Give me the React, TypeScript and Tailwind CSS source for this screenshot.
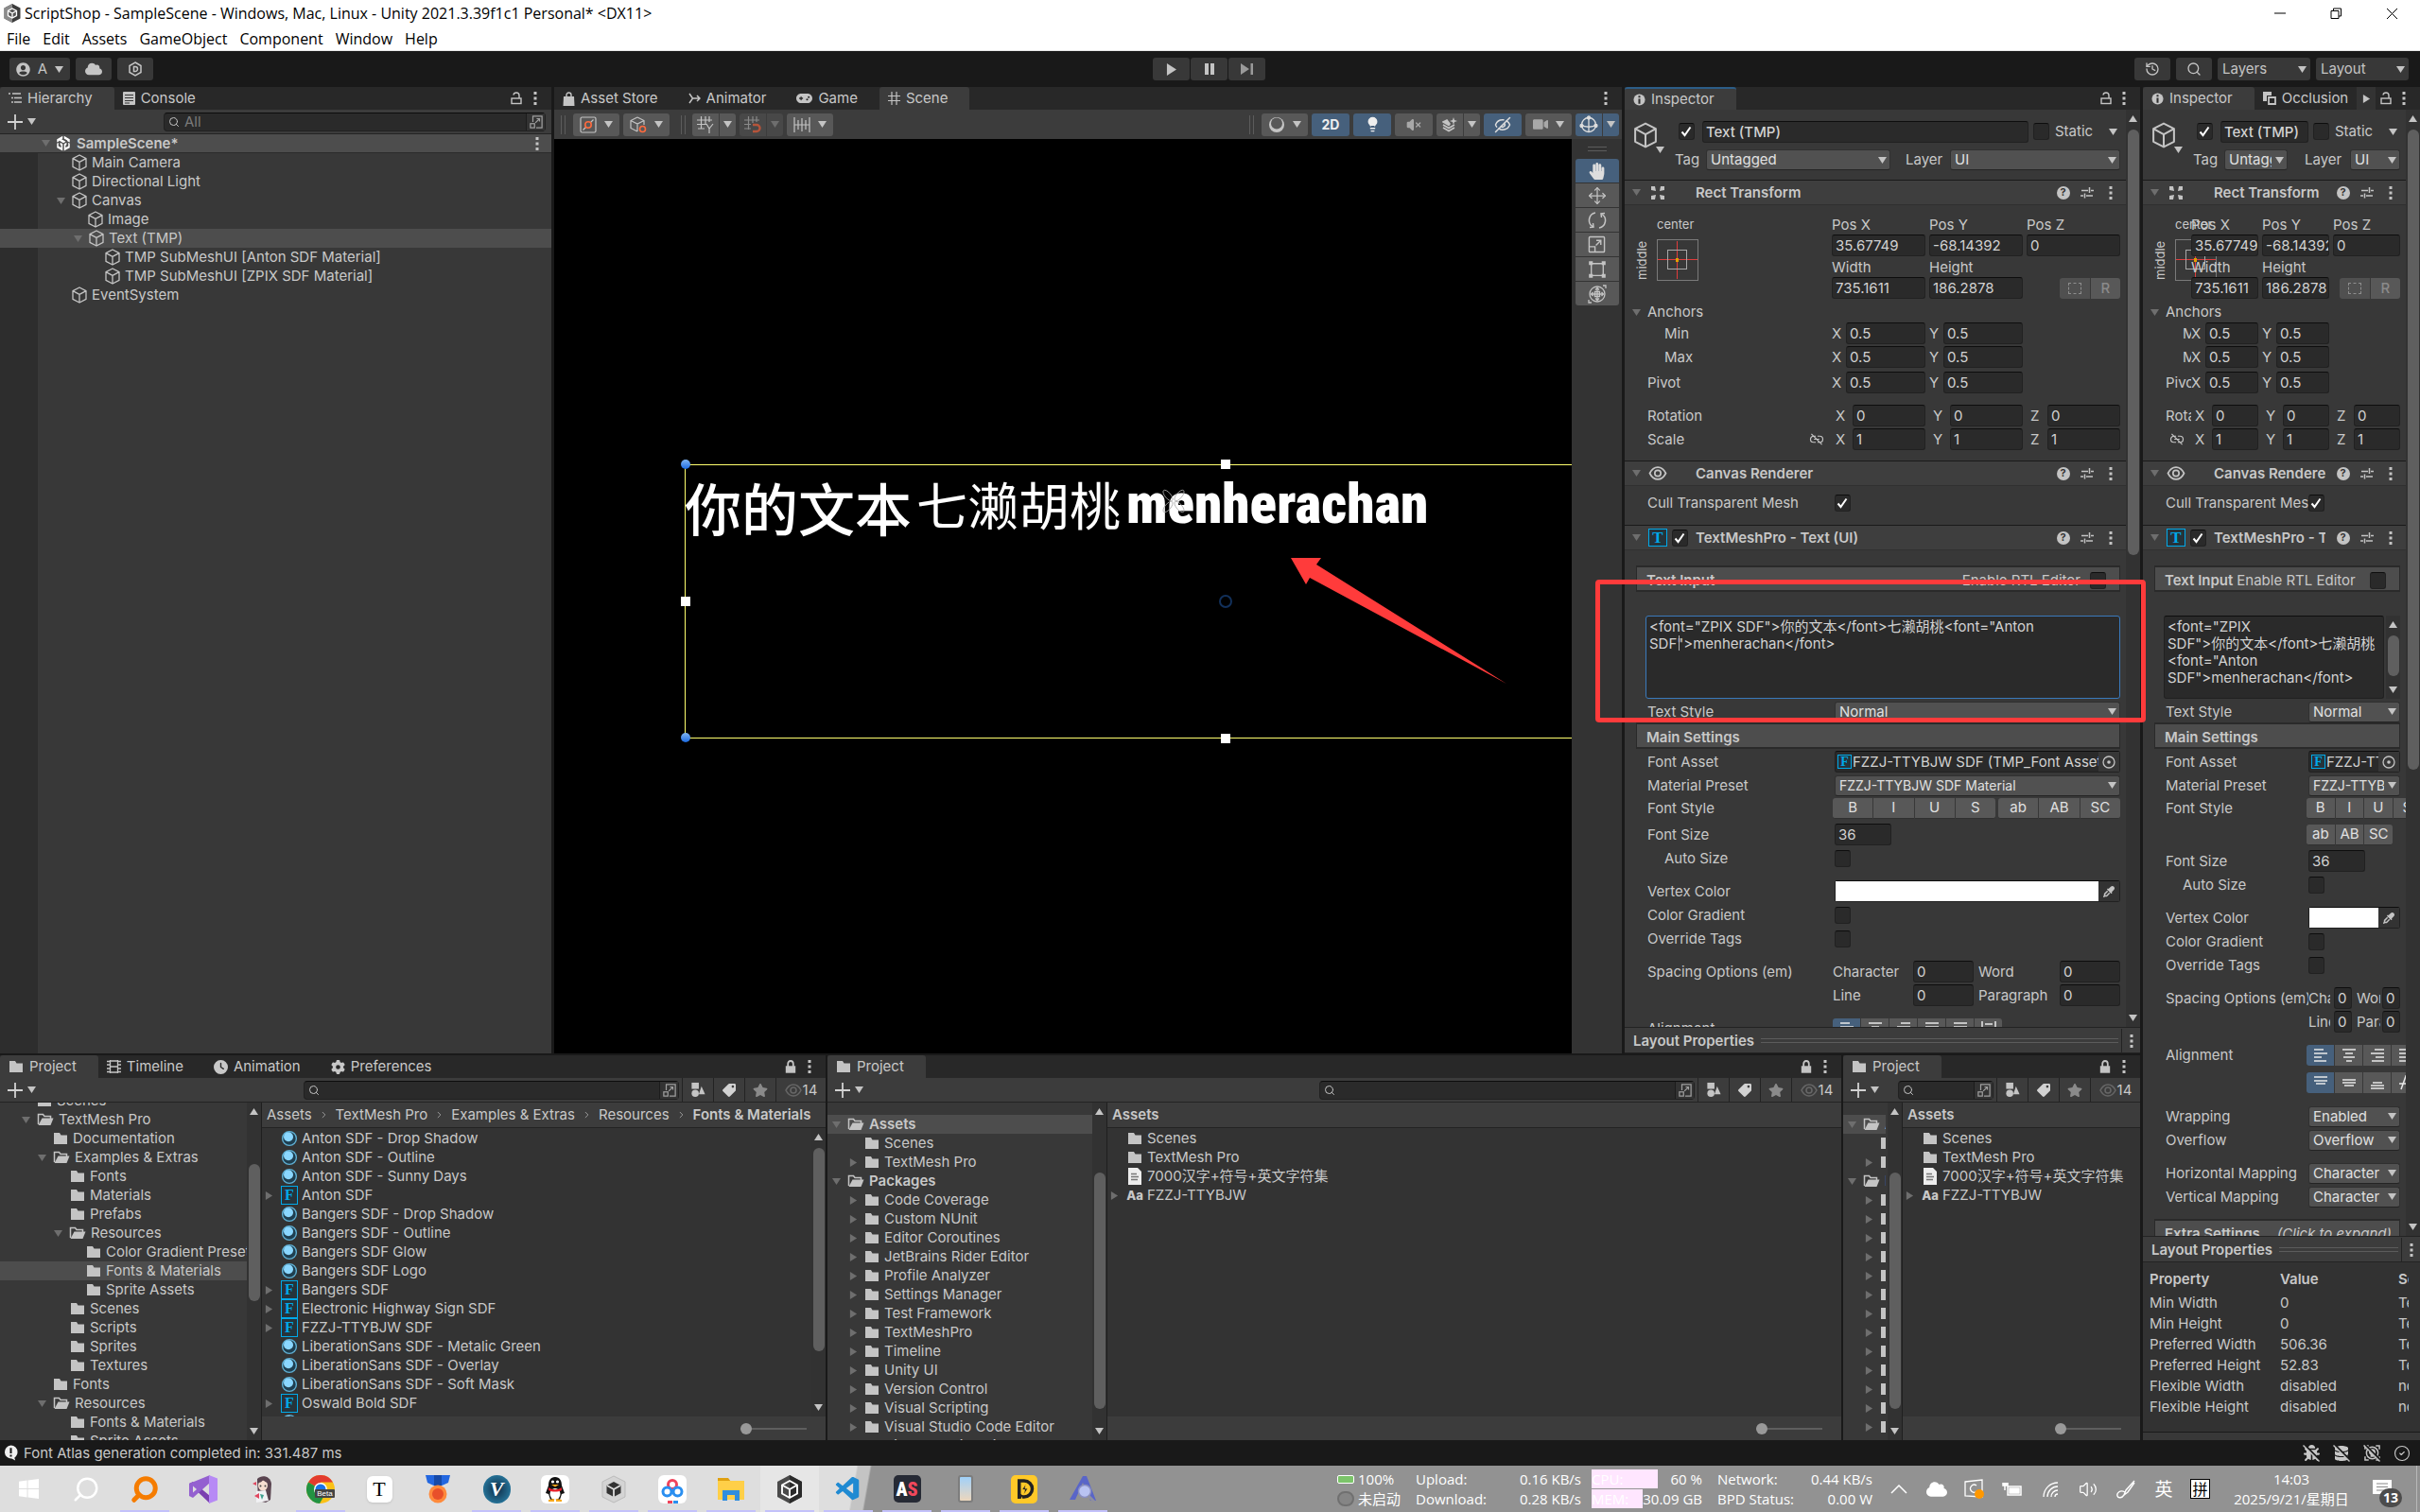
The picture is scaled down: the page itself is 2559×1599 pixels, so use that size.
import type { ReactNode } from 'react';
import { ChevronRight, CircleCheck, EyeOff, History, Lightbulb, Move, Search, Volume2, VolumeX } from 'lucide-react';
import { FaBug, FaCloud, FaDatabase, FaHandPaper, FaStar, FaTag, FaUserCircle, FaVideo } from 'react-icons/fa';
import { FaClock, FaEyeDropper, FaGamepad, FaGear } from 'react-icons/fa6';
import { VscVscode } from 'react-icons/vsc';

const fieldBase =
  'min-w-0 rounded-[3px] border border-[#212121] border-t-[#0d0d0d] bg-[#2a2a2a] text-[#d2d2d2] outline-none';
const divider = 'border-[#232323]';

/* ---------- icons ---------- */

function Tri({ dir = 'down', dim = false, className = '' }: { dir?: 'down' | 'right' | 'up'; dim?: boolean; className?: string }) {
  const d = dir === 'down' ? 'M0 1h10L5 9z' : dir === 'up' ? 'M0 9h10L5 1z' : 'M1 0v10l8-5z';
  return (
    <svg viewBox="0 0 10 10" className={'h-[9px] w-[9px] shrink-0 ' + (dim ? 'fill-[#6e6e6e] ' : 'fill-[#c4c4c4] ') + className}>
      <path d={d} />
    </svg>
  );
}

function Dots() {
  return (
    <svg viewBox="0 0 4 16" className="h-4 w-1 shrink-0 fill-[#c4c4c4]">
      <rect x="0.5" y="1" width="3" height="3" />
      <rect x="0.5" y="6.5" width="3" height="3" />
      <rect x="0.5" y="12" width="3" height="3" />
    </svg>
  );
}

function LockIcon({ open = false }: { open?: boolean }) {
  return (
    <svg viewBox="0 0 12 14" className="h-[14px] w-3 shrink-0" fill="none" stroke="#c4c4c4" strokeWidth="1.4">
      {open ? (
        <>
          <rect x="1" y="7" width="10" height="5.5" />
          <path d="M3 3.5C3.2 1.6 4.5 1 6 1c2 0 3 1 3 3v3" />
        </>
      ) : (
        <>
          <rect x="1.5" y="7" width="9" height="6" fill="#c4c4c4" />
          <path d="M3.2 7V4c0-2 1-3 2.8-3s2.8 1 2.8 3v3" strokeWidth="1.8" />
        </>
      )}
    </svg>
  );
}

function Cube({ className = 'h-[18px] w-[18px]' }: { className?: string }) {
  return (
    <svg
      viewBox="0 0 18 18"
      className={'shrink-0 ' + className}
      fill="none"
      stroke="#c4c4c4"
      strokeWidth="1.3"
      strokeLinejoin="round"
    >
      <path d="M9 1l7 3.6v8.8L9 17l-7-3.6V4.6zM2 4.6l7 3.8 7-3.8M9 8.4V17" />
    </svg>
  );
}

function UnityLogo({ className = 'h-[18px] w-[18px]' }: { className?: string }) {
  return (
    <svg viewBox="0 0 24 24" className={'shrink-0 ' + className} fill="#fff">
      <path d="M11 1L3 5.500v4.500l3-1.700v-.9l2.700 1.600L12 11l3.300-2-3.300-1.900 0 0 2.700-1.600L17.500 7.400v.9l3.500 1.700V5.500L13 1v3.600l1.500.9L12 7 9.500 5.500l1.500-.9z" />
      <path d="M3 11.500v6L11 22v-9.600L7.500 10.400v3.200l1.400.8v3L5 15.200v-4.800zM21 11.500v6L13 22v-9.600l3.500-2v3.200l-1.400.8v3l3.900-2.200v-4.800z" />
    </svg>
  );
}

function AppIcon() {
  return (
    <svg viewBox="0 0 18 20" className="mx-1 h-5 w-[18px] shrink-0">
      <path d="M9 0l8.500 4.500v11L9 20 .5 15.500v-11z" fill="#3c3c3c" />
      <path d="M9 0L.5 4.500v11L9 20z" fill="#8b8b8b" />
      <path d="M9 5l4.500 2.500v5L9 15l-4.500-2.500v-5z" fill="#555" stroke="#fff" strokeWidth="1.300" />
      <path d="M9 10v5M9 10L4.500 7.500M9 10l4.500-2.500" stroke="#fff" strokeWidth="1.300" />
    </svg>
  );
}

function Folder({ open = false }: { open?: boolean }) {
  return open ? (
    <svg viewBox="0 0 18 16" className="h-4 w-[18px] shrink-0">
      <path d="M1.500 13V2.500h5l1.500 2h6.500V7" fill="none" stroke="#c4c4c4" strokeWidth="1.500" />
      <path d="M5.500 6.500H17.500L14.500 14H1.500z" fill="#c4c4c4" />
    </svg>
  ) : (
    <svg viewBox="0 0 16 14" className="h-[14px] w-4 shrink-0">
      <path d="M1 1h6l1.500 2.500H15V13H1z" fill="#c4c4c4" />
    </svg>
  );
}

function MaterialBall() {
  return (
    <svg viewBox="0 0 18 18" className="h-[18px] w-[18px] shrink-0">
      <circle cx="9" cy="9" r="7.400" fill="#1f3f50" stroke="#5fb0d4" strokeWidth="1.400" />
      <circle cx="8" cy="7.300" r="5" fill="#8ad7ff" />
    </svg>
  );
}

function GlyphBox({ glyph, className = 'h-5 w-[18px] text-[16px]' }: { glyph: string; className?: string }) {
  return (
    <span
      className={
        "flex shrink-0 items-center justify-center border border-[#00a9e9] bg-[#26333a] font-['Liberation_Serif',serif] leading-none font-bold text-[#00a9e9] " +
        className
      }
    >
      {glyph}
    </span>
  );
}

function DocIcon() {
  return (
    <svg viewBox="0 0 16 18" className="h-[18px] w-4 shrink-0">
      <path d="M1 0h10l4 4v14H1z" fill="#ededed" />
      <path d="M4 6.500h6M4 9.500h8M4 12.500h7" stroke="#777" strokeWidth="1.300" />
    </svg>
  );
}

function InfoIcon() {
  return (
    <svg viewBox="0 0 14 14" className="h-[13px] w-[13px] shrink-0">
      <circle cx="7" cy="7" r="6.500" fill="#c4c4c4" />
      <path d="M7 2.500v2M7 6v5.500" stroke="#2d2d2d" strokeWidth="2.200" />
    </svg>
  );
}

function HelpIcon() {
  return (
    <span className="flex h-[14px] w-[14px] items-center justify-center rounded-full bg-[#c4c4c4] text-[11px] leading-none font-bold text-[#333]">
      ?
    </span>
  );
}

function PresetIcon() {
  return (
    <svg viewBox="0 0 14 14" className="h-[14px] w-[14px]" stroke="#c4c4c4" strokeWidth="1.500">
      <path d="M1 4.500h7M11 4.500h3M9.500 1v6M0 10h3M6 10h7M4.500 7.500v5" />
    </svg>
  );
}

function SearchWindowIcon() {
  return (
    <svg viewBox="0 0 16 16" className="h-[14px] w-[14px]" fill="none" stroke="#a0a0a0" strokeWidth="1.400">
      <path d="M4 8V1h11v14H8" />
      <rect x="1" y="10" width="5" height="5" />
      <path d="M7 9l5-5M8.500 4H12v3.500" />
    </svg>
  );
}

function ListLines() {
  return (
    <svg viewBox="0 0 14 14" className="h-[14px] w-[14px]" stroke="#c4c4c4" strokeWidth="1.400">
      <path d="M0 2h2M4 2h9M3 6.500h2M6 6.500h8M3 11h2M6 11h8" />
    </svg>
  );
}

function ConsoleIcon() {
  return (
    <svg viewBox="0 0 13 14" className="h-[14px] w-[13px]">
      <rect width="13" height="14" rx="1" fill="#c4c4c4" />
      <path d="M2 3.500h9M2 6.500h9M2 9.500h9M2 12h5" stroke="#333" strokeWidth="1.100" />
    </svg>
  );
}

function GridIcon() {
  return (
    <svg viewBox="0 0 13 14" className="h-[14px] w-[13px]" stroke="#c4c4c4" strokeWidth="1.200">
      <path d="M4 0v14M9 0v14M0 4.500h13M0 9.500h13" />
    </svg>
  );
}

function BagIcon() {
  return (
    <svg viewBox="0 0 13 15" className="h-[15px] w-[13px]">
      <path d="M1 5h11l.5 10H.5z" fill="#c4c4c4" />
      <path d="M4 7V3.500C4 2 5 1 6.500 1S9 2 9 3.500V7" fill="none" stroke="#c4c4c4" strokeWidth="1.400" />
    </svg>
  );
}

function AnimatorIcon() {
  return (
    <svg viewBox="0 0 13 12" className="h-3 w-[13px]" fill="none" stroke="#c4c4c4" strokeWidth="1.500">
      <path d="M1 1l3.500 5L1 11M4.500 6H12M9 3l3 3-3 3" />
    </svg>
  );
}

function FilmIcon() {
  return (
    <svg viewBox="0 0 15 14" className="h-[14px] w-[15px]" fill="none" stroke="#c4c4c4" strokeWidth="1.300">
      <path d="M3.500 0v14M11.500 0v14M3.500 7h8M3.500 1h8M3.500 13h8" />
      <path d="M0 1.500h3M0 5h3M0 9h3M0 12.500h3M12 1.500h3M12 5h3M12 9h3M12 12.500h3" />
    </svg>
  );
}

function LinkOffIcon() {
  return (
    <svg viewBox="0 0 16 14" className="h-[13px] w-4" fill="none" stroke="#c4c4c4" strokeWidth="1.300">
      <path d="M7 3.500H4.500a3.500 3.500 0 000 7H7M9 3.500h2.500a3.500 3.500 0 010 7H9M5 7h6M2 1l12 12" />
    </svg>
  );
}

function ShapesIcon() {
  return (
    <svg viewBox="0 0 16 18" className="h-[17px] w-4 fill-[#c4c4c4]">
      <rect x="1" y="1" width="8" height="7" />
      <circle cx="5" cy="13" r="4" />
      <path d="M12 5l4 9H9z" />
    </svg>
  );
}

function EyeMark({ className }: { className: string }) {
  return (
    <svg viewBox="0 0 18 16" className={className} fill="none" stroke="currentColor" strokeWidth="1.600">
      <path d="M1 8c2-4 5-6 8-6s6 2 8 6c-2 4-5 6-8 6S3 12 1 8z" />
      <circle cx="9" cy="8" r="3" />
    </svg>
  );
}

/* dark gap with a light stroke, laid over an icon that is switched off */
function Slashed({ children }: { children: ReactNode }) {
  return (
    <span className="relative flex h-[18px] w-[18px] items-center justify-center">
      {children}
      <svg viewBox="0 0 18 18" className="absolute inset-0 h-[18px] w-[18px]">
        <path d="M2 0l17 17" stroke="#191919" strokeWidth="2" />
        <path d="M0.500 0.500l17 17" stroke="#c4c4c4" strokeWidth="1.400" />
      </svg>
    </span>
  );
}

/* ---------- shared controls ---------- */

function Check({ id, label, checked = false }: { id?: string; label?: string; checked?: boolean }) {
  return (
    <span className="relative flex shrink-0">
      <input
        id={id}
        aria-label={label}
        type="checkbox"
        defaultChecked={checked}
        className="peer h-[18px] w-[17px] appearance-none rounded-[3px] border border-[#212121] border-t-[#0d0d0d] bg-[#2a2a2a]"
      />
      <svg
        viewBox="0 0 12 12"
        className="pointer-events-none absolute top-[3px] left-[2px] hidden h-3 w-3 peer-checked:block"
        fill="none"
        stroke="#fff"
        strokeWidth="2"
      >
        <path d="M1.500 6.500L4.500 10l6-8.500" />
      </svg>
    </span>
  );
}

function Pick({ id, label, value, className = '' }: { id?: string; label?: string; value: string; className?: string }) {
  return (
    <span className={'relative flex h-[22px] min-w-0 items-center ' + className}>
      <select
        id={id}
        aria-label={label}
        className="h-full w-full appearance-none overflow-hidden rounded-[3px] border border-[#303030] border-b-[#242424] bg-[#515151] pl-1 text-[#e0e0e0] outline-none"
      >
        <option>{value}</option>
      </select>
      <span className="pointer-events-none absolute right-px flex h-[18px] w-4 items-center justify-center bg-[#515151]">
        <Tri />
      </span>
    </span>
  );
}

function TextField({ id, label, value, className = '' }: { id?: string; label?: string; value: string; className?: string }) {
  return (
    <input
      id={id}
      aria-label={label}
      defaultValue={value}
      className={fieldBase + ' h-[23px] pl-[3px] ' + className}
    />
  );
}

function Tab({ icon, children, active = false, focused = false }: { icon: ReactNode; children: ReactNode; active?: boolean; focused?: boolean }) {
  return (
    <button
      className={
        'flex h-6 shrink-0 items-center gap-[6px] rounded-t-[3px] pr-[23px] pl-[9px] ' +
        (active ? 'bg-[#3c3c3c] ' : '') +
        (focused ? 'border-t-2 border-[#2c5d87]' : '')
      }
    >
      {icon}
      {children}
    </button>
  );
}

function TabBar({ children, locked, gap = 'gap-3' }: { children: ReactNode; locked?: 'open' | 'closed'; gap?: string }) {
  return (
    <div className="flex h-6 shrink-0 items-center bg-[#282828]">
      <div className="flex min-w-0 flex-1 overflow-hidden">{children}</div>
      <div className={'flex shrink-0 items-center pr-[15px] ' + gap}>
        {locked && (
          <button aria-label="Lock">
            <LockIcon open={locked === 'open'} />
          </button>
        )}
        <button aria-label="More">
          <Dots />
        </button>
      </div>
    </div>
  );
}

function Scrollbar({ thumb, className = '' }: { thumb: string; className?: string }) {
  return (
    <div className={'flex w-[15px] shrink-0 flex-col items-center bg-[#323232] py-[5px] ' + className}>
      <Tri dir="up" />
      <div className="flex min-h-0 w-full flex-1 flex-col items-center py-[7px]">
        <div className={'w-3 shrink-0 rounded-full bg-[#5f5f5f] ' + thumb} />
      </div>
      <Tri />
    </div>
  );
}

/* ---------- hierarchy ---------- */

const hierarchy = [
  { name: 'Main Camera', pad: 'pl-[75px]' },
  { name: 'Directional Light', pad: 'pl-[75px]' },
  { name: 'Canvas', pad: 'pl-[60px]', open: true },
  { name: 'Image', pad: 'pl-[92px]' },
  { name: 'Text (TMP)', pad: 'pl-[78px]', open: true, selected: true },
  { name: 'TMP SubMeshUI [Anton SDF Material]', pad: 'pl-[110px]' },
  { name: 'TMP SubMeshUI [ZPIX SDF Material]', pad: 'pl-[110px]' },
  { name: 'EventSystem', pad: 'pl-[75px]' },
];

function Hierarchy() {
  return (
    <section className="flex w-[583px] shrink-0 flex-col overflow-hidden bg-[#383838]">
      <TabBar locked="open">
        <Tab active icon={<ListLines />}>
          Hierarchy
        </Tab>
        <Tab icon={<ConsoleIcon />}>Console</Tab>
      </TabBar>
      <div className="flex h-[26px] shrink-0 items-center border-b border-[#232323] bg-[#3c3c3c] pr-[6px] pl-2">
        <AddButton />
        <SearchBox placeholder="All" className="ml-auto w-[404px]" />
      </div>
      <div className="flex h-5 items-center gap-[5px] border-b border-[#2b2b2b] bg-[#4d4d4d] pr-[13px] pl-[44px] font-semibold">
        <Tri dim />
        <UnityLogo />
        <span className="flex-1">SampleScene*</span>
        <Dots />
      </div>
      <ul className="flex-1 bg-linear-to-r from-[#2d2d2d] from-[40px] to-[#383838] to-[40px]">
        {hierarchy.map((n) => (
          <li
            key={n.name}
            className={'flex h-5 items-center gap-1 whitespace-nowrap ' + n.pad + (n.selected ? ' bg-[#4d4d4d]' : '')}
          >
            {n.open && <Tri dim className="mr-0.5" />}
            <Cube />
            {n.name}
          </li>
        ))}
      </ul>
    </section>
  );
}

function AddButton() {
  return (
    <button aria-label="Add" className="flex shrink-0 items-center gap-[5px]">
      <svg viewBox="0 0 16 16" className="h-4 w-4" stroke="#d2d2d2" strokeWidth="1.800">
        <path d="M8 0v16M0 8h16" />
      </svg>
      <Tri />
    </button>
  );
}

function SearchBox({ placeholder, className }: { placeholder?: string; className: string }) {
  return (
    <div className={'flex h-5 items-center rounded-[4px] border border-[#212121] border-t-[#0d0d0d] bg-[#2a2a2a] ' + className}>
      <Search className="ml-1 h-3 w-3 shrink-0 text-[#c4c4c4]" />
      <input
        aria-label="Search"
        placeholder={placeholder}
        className="w-full min-w-0 flex-1 bg-transparent pl-[5px] text-[#d2d2d2] outline-none placeholder:text-[#7a7a7a]"
      />
      <button aria-label="Open search window" className="flex h-full w-5 shrink-0 items-center justify-center border-l border-[#1c1c1c] bg-[#333]">
        <SearchWindowIcon />
      </button>
    </div>
  );
}

/* ---------- scene view ---------- */

function Grip({ vertical = false }: { vertical?: boolean }) {
  return vertical ? (
    <span className="h-[5px] w-5 border-y border-[#5c5c5c]" />
  ) : (
    <span className="h-5 w-[5px] border-x border-[#5c5c5c]" />
  );
}

function ToolButton({ label, children, on = false, arrow = false, split = false, dim = false, className = '' }: {
  label: string;
  children: ReactNode;
  on?: boolean;
  arrow?: boolean;
  split?: boolean;
  dim?: boolean;
  className?: string;
}) {
  const bg = on ? 'bg-[#46607c] ' : dim ? 'bg-[#484848] ' : 'bg-[#585858] ';
  if (split) {
    return (
      <span className={'flex gap-px ' + className}>
        <button aria-label={label} className={'flex h-6 w-7 items-center justify-center rounded-l-[3px] ' + bg}>
          {children}
        </button>
        <button aria-label={label + ' options'} className={'flex h-6 w-[17px] items-center justify-center rounded-r-[3px] ' + bg}>
          <Tri dim={dim} />
        </button>
      </span>
    );
  }
  return (
    <button
      aria-label={label}
      className={'flex h-6 items-center justify-center gap-2 rounded-[3px] ' + (arrow ? 'w-[49px] ' : 'w-10 ') + bg + className}
    >
      {children}
      {arrow && <Tri />}
    </button>
  );
}

function SceneToolbar() {
  return (
    <div className="flex h-[31px] shrink-0 items-center gap-1 bg-[#3c3c3c] pr-[3px] pl-[7px]">
      <Grip />
      <ToolButton label="Pivot" arrow className="ml-1">
        <svg viewBox="0 0 18 18" className="h-[18px] w-[18px]" fill="none" stroke="#c4c4c4" strokeWidth="1.200">
          <rect x="1" y="1" width="16" height="16" rx="1.500" />
          <path d="M14.500 3.500l-3 3M6.500 11.500l-3 3" />
          <circle cx="9" cy="9" r="3.200" stroke="#ff6a3d" strokeWidth="1.600" />
        </svg>
      </ToolButton>
      <ToolButton label="Local" arrow>
        <svg viewBox="0 0 18 18" className="h-[18px] w-[18px]" fill="none" stroke="#c4c4c4" strokeWidth="1.200">
          <path d="M8 1l7 3.500V9M8 16l-7-3.500v-8L8 1M1 4.500L8 8l7-3.500M8 8v8" />
          <circle cx="13.500" cy="13.500" r="3" stroke="#ff6a3d" strokeWidth="1.600" />
        </svg>
      </ToolButton>
      <span className="mr-[3px] ml-2 flex">
        <Grip />
      </span>
      <ToolButton label="Grid" split>
        <svg viewBox="0 0 18 18" className="h-[18px] w-[18px]" fill="none" stroke="#c4c4c4" strokeWidth="1.200">
          <path d="M4.500 0v13M9 0v9M13 0v6M0 4h16M0 8.500h10M1 13h7M10 8l3 5 4-5M13 13v5" />
        </svg>
      </ToolButton>
      <ToolButton label="Snap" split dim>
        <svg viewBox="0 0 18 18" className="h-[18px] w-[18px]" fill="none" stroke="#8a8a8a" strokeWidth="1.200">
          <path d="M4.500 0v14M9 0v7M13 0v6M0 4h16M0 8.500h7M0 13h7" />
          <path d="M9 9h4a3.500 3.500 0 010 7H9" stroke="#b5543a" strokeWidth="2.400" />
        </svg>
      </ToolButton>
      <ToolButton label="Increment" arrow>
        <svg viewBox="0 0 18 18" className="h-[18px] w-[18px]" fill="none" stroke="#c4c4c4" strokeWidth="1.200">
          <path d="M1 1v16M17 1v16M5 4v10M9 2v14M13 4v10M1 9h16" />
        </svg>
      </ToolButton>
      <div className="ml-auto flex items-center gap-1">
        <span className="mr-1 flex">
          <Grip />
        </span>
        <ToolButton label="Draw mode" arrow>
          <svg viewBox="0 0 18 18" className="h-[18px] w-[18px]">
            <circle cx="9" cy="9" r="8" fill="#c4c4c4" />
            <circle cx="9" cy="7.500" r="6" fill="#585858" />
          </svg>
        </ToolButton>
        <ToolButton label="2D" on>
          <span className="text-sm font-bold text-[#eee]">2D</span>
        </ToolButton>
        <ToolButton label="Lighting" on>
          <Lightbulb className="h-[17px] w-[17px] fill-[#eee] text-[#eee]" />
        </ToolButton>
        <ToolButton label="Audio">
          <VolumeX className="h-4 w-4 fill-[#a8a8a8] text-[#a8a8a8]" />
        </ToolButton>
        <ToolButton label="Effects" split>
          <svg viewBox="0 0 16 16" className="h-4 w-4" fill="none" stroke="#c4c4c4" strokeWidth="1.600">
            <path d="M1 11l6 3.500 6-3.500M1 8l6 3.500L13 8" />
            <path d="M1 5l4-2 3 4-1 1.500z" fill="#c4c4c4" />
            <path d="M12 0l1 3 3 1-3 1-1 3-1-3-3-1 3-1z" fill="#c4c4c4" stroke="none" />
          </svg>
        </ToolButton>
        <ToolButton label="Visibility" on>
          <EyeOff className="h-[18px] w-[18px] -scale-x-100 text-[#ddd]" />
        </ToolButton>
        <ToolButton label="Camera" arrow>
          <FaVideo className="h-[15px] w-4 text-[#a8a8a8]" />
        </ToolButton>
        <ToolButton label="Gizmos" split on>
          <svg viewBox="0 0 20 20" className="h-5 w-5" fill="none" stroke="#ddd" strokeWidth="1.300">
            <circle cx="10" cy="10" r="7.500" />
            <path d="M10 2v16M2 10c4 3 12 3 16 0" />
            <circle cx="10" cy="2.500" r="1.500" fill="#ddd" />
            <circle cx="2.500" cy="11" r="1.500" fill="#ddd" />
            <circle cx="17.500" cy="11" r="1.500" fill="#ddd" />
          </svg>
        </ToolButton>
      </div>
    </div>
  );
}

const sceneTools = [
  { label: 'Hand', icon: <FaHandPaper className="h-[18px] w-[17px] text-[#ddd]" /> },
  { label: 'Move', icon: <Move className="h-5 w-5" strokeWidth={1.5} /> },
  {
    label: 'Rotate',
    icon: (
      <svg viewBox="0 0 20 20" className="h-5 w-5" fill="none" stroke="currentColor" strokeWidth="1.500">
        <path d="M8 2a8 8 0 00-3 14.500M12 18a8 8 0 003-14.500M2 17.500l4-.5-.500-4M18 2.500l-4 .5.500 4" />
      </svg>
    ),
  },
  {
    label: 'Scale',
    icon: (
      <svg viewBox="0 0 20 20" className="h-[19px] w-[19px]" fill="none" stroke="currentColor" strokeWidth="1.500">
        <rect x="1.500" y="1.500" width="17" height="17" rx="1" />
        <path d="M2 12.500h6V18M9 11l5-5M9.500 5.500H14.500v5" />
      </svg>
    ),
  },
  {
    label: 'Rect',
    icon: (
      <svg viewBox="0 0 20 20" className="h-[18px] w-[18px]" fill="currentColor" stroke="currentColor" strokeWidth="1.500">
        <path d="M3 3h14v14H3z" fill="none" />
        <path d="M1 1h3v3H1zM16 1h3v3h-3zM1 16h3v3H1zM16 16h3v3h-3z" />
      </svg>
    ),
  },
  {
    label: 'Transform',
    icon: (
      <svg viewBox="0 0 20 20" className="h-5 w-5" fill="none" stroke="currentColor" strokeWidth="1.300">
        <circle cx="10" cy="10" r="8" />
        <path d="M10 3.500v13M3.500 10h13M8 5.500l2-2 2 2M8 14.500l2 2 2-2M5.500 8l-2 2 2 2M14.500 8l2 2-2 2M7.500 7.500h5v5h-5z" />
        <path d="M16 1h3v3M4 19H1v-3" />
      </svg>
    ),
  },
];

function Handle({ className }: { className: string }) {
  return <span className={'absolute h-[10px] w-[10px] bg-white ' + className} />;
}

function Dot({ className }: { className: string }) {
  return <span className={'absolute h-[10px] w-[10px] rounded-full bg-linear-to-b from-[#7fb4f0] to-[#1668e0] ' + className} />;
}

function Scene() {
  return (
    <section className="flex min-w-0 flex-1 flex-col bg-[#383838]">
      <TabBar>
        <Tab icon={<BagIcon />}>Asset Store</Tab>
        <Tab icon={<AnimatorIcon />}>Animator</Tab>
        <Tab icon={<FaGamepad className="h-4 w-[17px] text-[#c4c4c4]" />}>Game</Tab>
        <Tab active icon={<GridIcon />}>
          Scene
        </Tab>
      </TabBar>
      <SceneToolbar />
      <div className="flex min-h-0 flex-1">
        <div className="relative min-w-0 flex-1 overflow-hidden bg-black">
          <div className="absolute top-[344px] left-[138px] h-[290px] w-[1144px] border border-[#ffff6e]" />
          <Dot className="top-[339px] left-[134px]" />
          <Dot className="top-[628px] left-[134px]" />
          <Handle className="top-[339px] left-[705px]" />
          <Handle className="top-[629px] left-[705px]" />
          <Handle className="top-[484px] left-[134px]" />
          <span className="absolute top-[482px] left-[703px] h-[14px] w-[14px] rounded-full border-2 border-[#12305a]" />
          <p className="absolute top-[345px] left-[138px] font-['Noto_Sans_CJK_SC',sans-serif] text-[60px] leading-[88px] font-medium whitespace-nowrap text-white">
            你的文本
          </p>
          <p className="absolute top-[342px] left-[383px] font-['Noto_Sans_CJK_SC',sans-serif] text-[54px] leading-[88px] whitespace-nowrap text-white">
            七濑胡桃
          </p>
          <p className="absolute top-[346px] left-[605px] font-['Roboto_Condensed','Roboto',sans-serif] text-[59px] leading-[80px] font-black whitespace-nowrap text-white">
            menherachan
          </p>
          <svg viewBox="0 0 28 28" className="absolute top-[369px] left-[641px] h-7 w-7" fill="none" stroke="#aaa" strokeWidth="0.800">
            <ellipse cx="8" cy="8" rx="3" ry="7" transform="rotate(-40 8 8)" />
            <ellipse cx="20" cy="8" rx="3" ry="7" transform="rotate(40 20 8)" />
            <ellipse cx="8" cy="20" rx="3" ry="7" transform="rotate(40 8 20)" />
            <ellipse cx="20" cy="20" rx="3" ry="7" transform="rotate(-40 20 20)" />
          </svg>
          <svg viewBox="0 0 230 134" className="absolute top-[443px] left-[779px] h-[134px] w-[230px] fill-[#ff3b3b]">
            <path d="M0 0h32l-5 7 201 126L20 21l-4 7z" />
          </svg>
        </div>
        <div className="flex w-[53px] shrink-0 flex-col items-center bg-[#333]">
          <span className="mt-[8px] mb-[8px] flex">
            <Grip vertical />
          </span>
          <div className="flex flex-col gap-px">
            {sceneTools.map((t, i) => (
              <button
                key={t.label}
                aria-label={t.label}
                className={
                  'flex h-[25px] w-[46px] items-center justify-center text-[#c4c4c4] first:rounded-t-[3px] last:rounded-b-[3px] ' +
                  (i === 0 ? 'bg-[#46607c]' : 'bg-[#585858]')
                }
              >
                {t.icon}
              </button>
            ))}
          </div>
        </div>
      </div>
    </section>
  );
}

/* ---------- inspector ---------- */

function ComponentHeader({ icon, title, check = false }: { icon: ReactNode; title: string; check?: boolean }) {
  return (
    <div className="flex h-[27px] shrink-0 items-center border-t border-b border-t-[#1a1a1a] border-b-[#303030] bg-[#3e3e3e] pr-1 pl-2">
      <Tri dim />
      <span className="ml-2 flex w-5 shrink-0 justify-center">{icon}</span>
      <span className="flex w-[30px] shrink-0 pl-[5px]">{check && <Check label={title} checked />}</span>
      <span className="mr-[6px] min-w-0 flex-1 overflow-hidden font-semibold whitespace-nowrap">{title}</span>
      <span className="grid w-[75px] shrink-0 grid-cols-3 items-center justify-items-center">
        <HelpIcon />
        <PresetIcon />
        <Dots />
      </span>
    </div>
  );
}

function SectionBar({ title, children, className }: { title: string; children?: ReactNode; className: string }) {
  return (
    <div
      className={
        'mr-[6px] ml-3 flex h-7 shrink-0 items-center overflow-hidden border border-t-2 border-b-2 border-[#2a2a2a] bg-[#4d4d4d] pt-1 pl-[10px] whitespace-nowrap ' +
        className
      }
    >
      <span className="font-semibold">{title}</span>
      {children}
    </div>
  );
}

function StyleButtons({ items, className }: { items: string[]; className: string }) {
  return (
    <div className={'flex h-[22px] gap-px ' + className}>
      {items.map((t) => (
        <button
          key={t}
          className="flex min-w-0 flex-1 items-center justify-center border-b border-[#303030] bg-[#585858] text-[#e0e0e0] first:rounded-l-[3px] last:rounded-r-[3px]"
        >
          {t}
        </button>
      ))}
    </div>
  );
}

const alignLines = [
  'M1 2h10M1 6h14M1 10h8M1 14h13',
  'M1 2h14M4 6h8M2 10h12M5 14h6',
  'M5 2h10M1 6h14M6 10h9M2 14h13',
  'M1 2h14M1 6h14M1 10h14M1 14h9',
  'M1 2h14M1 6h14M1 10h14M1 14h14',
  'M1 0v16M15 0v16M4 3h8M5 7h7M4 11h8',
];
const valignLines = ['M1 2h14M1 6h14M3 9h10', 'M1 5h14M1 8h14M3 11h10', 'M3 8h10M1 11h14M1 14h14', 'M1 9h14M3 15L8 1l5 14', 'M1 3h14M1 13h14', 'M1 5h14M1 11h14'];

function AlignButtons({ lines, label }: { lines: string[]; label: string }) {
  return (
    <div className="-ml-0.5 flex h-[22px] gap-px">
      {lines.map((d, i) => (
        <button
          key={d}
          aria-label={label + ' ' + (i + 1)}
          className={
            'flex w-[29px] shrink-0 items-center justify-center first:rounded-l-[3px] last:rounded-r-[3px] ' +
            (i === 0 ? 'bg-[#46607c]' : 'bg-[#585858]')
          }
        >
          <svg viewBox="0 0 16 16" className="h-4 w-4" fill="none" stroke="#e8e8e8" strokeWidth="1.500">
            <path d={d} />
          </svg>
        </button>
      ))}
    </div>
  );
}

const layoutProps = [
  ['Min Width', '0', 'TextMeshProUGUI'],
  ['Min Height', '0', 'TextMeshProUGUI'],
  ['Preferred Width', '506.36', 'TextMeshProUGUI'],
  ['Preferred Height', '52.83', 'TextMeshProUGUI'],
  ['Flexible Width', 'disabled', 'none'],
  ['Flexible Height', 'disabled', 'none'],
];

const markup = '<font="ZPIX SDF">你的文本</font>七濑胡桃<font="Anton SDF">menherachan</font>';
const markupLines = '<font="ZPIX\nSDF">你的文本</font>七濑胡桃\n<font="Anton\nSDF">menherachan</font>';

function Inspector({ narrow = false }: { narrow?: boolean }) {
  const p = narrow ? 'b-' : 'a-';
  const rectLabel = 'shrink-0 overflow-hidden whitespace-nowrap ' + (narrow ? 'w-[27px]' : 'w-[195px]');
  const propLabel = 'shrink-0 overflow-hidden whitespace-nowrap ' + (narrow ? 'w-[151px]' : 'w-[198px]');
  const row = 'flex h-[23px] shrink-0 items-center pr-[6px] pl-6';
  const three = 'grid min-w-0 flex-1 grid-cols-3 gap-1';

  const axis = (name: string, a: string, v: string) => (
    <span key={a} className="flex min-w-0 items-center">
      <label htmlFor={p + name + a} className="w-[15px] shrink-0">
        {a}
      </label>
      <TextField id={p + name + a} value={v} className="w-full" />
    </span>
  );
  const axisWide = (name: string, a: string, v: string) => (
    <span key={a} className="flex min-w-0 items-center pl-1">
      <label htmlFor={p + name + a} className="w-[18px] shrink-0">
        {a}
      </label>
      <TextField id={p + name + a} value={v} className="w-full" />
    </span>
  );

  return (
    <section className={'relative flex shrink-0 flex-col bg-[#383838] ' + (narrow ? 'w-[293px] overflow-hidden' : 'w-[545px]')}>
      <TabBar locked="open" gap="gap-[11px]">
        <Tab active focused={!narrow} icon={<InfoIcon />}>
          Inspector
        </Tab>
        {narrow && (
          <>
            <Tab
              icon={
                <svg viewBox="0 0 14 14" className="h-[14px] w-[14px] shrink-0">
                  <path d="M0 0h9v4H4v6H0z" fill="#c4c4c4" />
                  <path d="M6 6h7v7H6z" fill="none" stroke="#c4c4c4" strokeWidth="1.800" />
                </svg>
              }
            >
              Occlusion
            </Tab>
            <button aria-label="Next tabs" className="absolute left-[226px] flex h-6 w-5 items-center justify-center bg-[#333]">
              <Tri dir="right" />
            </button>
          </>
        )}
      </TabBar>

      <div className="flex min-h-0 flex-1">
        <div className="flex min-w-0 flex-1 flex-col overflow-hidden">
          <div className="flex h-[74px] shrink-0 pr-[6px] pl-2">
            <div className="relative mt-[13px] h-[34px] w-[34px] shrink-0">
              <Cube className="h-7 w-7" />
              <Tri className="absolute right-0 bottom-0" />
            </div>
            <div className="min-w-0 flex-1">
              <div className="mt-[11px] flex h-6 items-center pl-[15px]">
                <Check label="Active" checked />
                <TextField label="Name" value="Text (TMP)" className="ml-2 w-full flex-1 font-medium" />
                <span className="ml-[5px] flex shrink-0 items-center">
                  <Check id={p + 'static'} />
                  <label htmlFor={p + 'static'} className="ml-[6px] w-[57px]">
                    Static
                  </label>
                  <Tri className="mr-[3px]" />
                </span>
              </div>
              <div className="mt-[6px] flex h-6 items-center pl-[11px]">
                <label htmlFor={p + 'tag'} className="w-[33px] shrink-0">
                  Tag
                </label>
                <Pick id={p + 'tag'} value="Untagged" className={narrow ? 'w-[67px]' : 'w-[195px]'} />
                <label htmlFor={p + 'layer'} className={'shrink-0 ' + (narrow ? 'ml-[18px] w-[48px]' : 'ml-4 w-[47px]')}>
                  Layer
                </label>
                <Pick id={p + 'layer'} value="UI" className="flex-1" />
              </div>
            </div>
          </div>

          <ComponentHeader
            title="Rect Transform"
            icon={
              <svg viewBox="0 0 16 16" className="h-4 w-4 fill-[#c4c4c4]">
                <path d="M1 1h4l1 5-5-1zM15 1h-4l-1 5 5-1zM1 15h4l1-5-5 1zM15 15h-4l-1-5 5 1z" />
              </svg>
            }
          />
          <div className="relative flex shrink-0 flex-col pt-[11px] pb-[11px]">
            {/* anchor preset preview, sits under the position columns when the panel is narrow */}
            <div className="absolute top-[11px] left-[34px] w-11">
              <span className="block text-[13px] leading-[18px]">center</span>
              <button aria-label="Anchor presets" className="mt-[7px] flex">
                <svg viewBox="0 0 44 44" className="h-11 w-11" fill="none">
                  <rect x="0.500" y="0.500" width="43" height="43" stroke="#7a7a7a" />
                  <path d="M21.500 2v40M1 21.500h42" stroke="#e03c3c" />
                  <rect x="11.500" y="11.500" width="20" height="20" stroke="#a8a8a8" />
                  <rect x="20" y="20" width="3" height="4" fill="#e0a000" />
                </svg>
              </button>
            </div>
            <span className="absolute top-[36px] left-3 h-11 rotate-180 text-center text-[13px] leading-[12px] [writing-mode:vertical-rl]">
              middle
            </span>
            {[
              [
                ['Pos X', '35.67749'],
                ['Pos Y', '-68.14392'],
                ['Pos Z', '0'],
              ],
              [
                ['Width', '735.1611'],
                ['Height', '186.2878'],
              ],
            ].map((group, g) => (
              <div key={g} className="relative mb-0.5 flex pr-[6px] pl-6">
                <span className={rectLabel} />
                <div className={three}>
                  {group.map(([name, value]) => (
                    <span key={name} className="flex min-w-0 flex-col">
                      <label htmlFor={p + name} className="h-5 leading-5 whitespace-nowrap">
                        {name}
                      </label>
                      <TextField id={p + name} value={value} className="w-full" />
                    </span>
                  ))}
                  {g === 1 && (
                    <span className="flex h-[22px] w-16 gap-px self-end justify-self-end">
                      <button aria-label="Blueprint mode" className="flex flex-1 items-center justify-center rounded-l-[3px] bg-[#505050]">
                        <span className="h-3 w-[14px] border border-dashed border-[#8e8e8e]" />
                      </button>
                      <button className="flex-1 rounded-r-[3px] bg-[#585858] font-medium text-[#8a8a8a]">R</button>
                    </span>
                  )}
                </div>
              </div>
            ))}
            <div className="mt-0.5 mb-px flex h-5 items-center gap-[7px] pl-2">
              <Tri dim />
              Anchors
            </div>
            {['Min', 'Max', 'Pivot'].map((name) => (
              <div key={name} className={row + (name === 'Min' ? '' : name === 'Max' ? ' mt-0.5' : ' mt-1')}>
                <span className={rectLabel + (name === 'Pivot' ? '' : ' pl-[18px]')}>{name}</span>
                <div className={three}>
                  {axis(name, 'X', '0.5')}
                  {axis(name, 'Y', '0.5')}
                </div>
              </div>
            ))}
            <div className={row + ' mt-3'}>
              <span className={rectLabel}>Rotation</span>
              <div className={three}>{['X', 'Y', 'Z'].map((a) => axisWide('rot', a, '0'))}</div>
            </div>
            <div className={row + ' mt-0.5'}>
              <span className={rectLabel + ' flex items-center justify-between'}>
                {!narrow && 'Scale'}
                <button aria-label="Constrain proportions" className={narrow ? 'ml-1' : 'mr-2'}>
                  <LinkOffIcon />
                </button>
              </span>
              <div className={three}>{['X', 'Y', 'Z'].map((a) => axisWide('scale', a, '1'))}</div>
            </div>
          </div>

          <ComponentHeader title="Canvas Renderer" icon={<EyeMark className="h-[17px] w-5 text-[#c4c4c4]" />} />
          <div className={row + ' mt-[6px] mb-3'}>
            <label htmlFor={p + 'cull'} className={propLabel}>
              Cull Transparent Mesh
            </label>
            <Check id={p + 'cull'} checked />
          </div>

          <ComponentHeader title="TextMeshPro - Text (UI)" check icon={<GlyphBox glyph="T" className="h-[19px] w-5 text-[17px]" />} />
          <SectionBar title="Text Input" className="mt-4">
            <label htmlFor={p + 'rtl'} className={narrow ? 'ml-1' : 'ml-auto'}>
              Enable RTL Editor
            </label>
            <span className={'flex ' + (narrow ? 'ml-auto pr-[14px]' : 'mr-[14px] ml-[10px]')}>
              <Check id={p + 'rtl'} />
            </span>
          </SectionBar>
          <div className="relative mt-[25px] flex h-[88px] shrink-0 gap-0.5 pr-[6px] pl-[22px]">
            <textarea
              aria-label="Text Input"
              defaultValue={narrow ? markupLines : markup}
              spellCheck={false}
              className={
                'h-full min-w-0 flex-1 resize-none overflow-hidden rounded-[3px] border bg-[#2a2a2a] px-[3px] py-0.5 leading-[18px] text-[#d2d2d2] outline-none ' +
                (narrow ? 'border-[#212121] border-t-[#0d0d0d]' : 'border-[#3a79bb]')
              }
            />
            {narrow ? (
              <Scrollbar thumb="h-[43px]" />
            ) : (
              <span className="absolute top-[21px] left-[57px] h-4 w-px bg-[#b4b4b4]" />
            )}
          </div>
          <div className={row + ' mt-0.5'}>
            <label htmlFor={p + 'style'} className={propLabel}>
              Text Style
            </label>
            <Pick id={p + 'style'} value="Normal" className="flex-1" />
          </div>
          <SectionBar title="Main Settings" className="" />
          <div className={row + ' mt-0.5'}>
            <label htmlFor={p + 'font'} className={propLabel}>
              Font Asset
            </label>
            <div className={fieldBase + ' flex h-[23px] flex-1 items-center pl-0.5'}>
              <GlyphBox glyph="F" className="h-[15px] w-[15px] text-[14px]" />
              <input
                id={p + 'font'}
                readOnly
                defaultValue="FZZJ-TTYBJW SDF (TMP_Font Asset)"
                className="w-full min-w-0 flex-1 bg-transparent pl-px outline-none"
              />
              <button aria-label="Pick font asset" className="flex h-full w-[22px] shrink-0 items-center justify-center bg-[#373737]">
                <svg viewBox="0 0 14 14" className="h-[14px] w-[14px]">
                  <circle cx="7" cy="7" r="6" fill="none" stroke="#c4c4c4" strokeWidth="1.300" />
                  <circle cx="7" cy="7" r="1.800" fill="#c4c4c4" />
                </svg>
              </button>
            </div>
          </div>
          <div className={row + ' mt-0.5'}>
            <label htmlFor={p + 'mat'} className={propLabel}>
              Material Preset
            </label>
            <Pick id={p + 'mat'} value="FZZJ-TTYBJW SDF Material" className="flex-1 text-sm" />
          </div>
          <div className={row + ' mt-px'}>
            <span className={propLabel}>Font Style</span>
            {narrow ? (
              <StyleButtons items={['B', 'I', 'U', 'S']} className="-ml-0.5 w-[121px] shrink-0" />
            ) : (
              <>
                <StyleButtons items={['B', 'I', 'U', 'S']} className="-ml-0.5 flex-4" />
                <StyleButtons items={['ab', 'AB', 'SC']} className="ml-[3px] flex-3" />
              </>
            )}
          </div>
          {narrow && (
            <div className={row + ' mt-[5px]'}>
              <span className={propLabel} />
              <StyleButtons items={['ab', 'AB', 'SC']} className="-ml-0.5 w-[91px] shrink-0" />
            </div>
          )}
          <div className={row + ' mt-[5px]'}>
            <label htmlFor={p + 'size'} className={propLabel}>
              Font Size
            </label>
            <TextField id={p + 'size'} value="36" className="w-[60px]" />
          </div>
          <div className={row + ' mt-0.5'}>
            <label htmlFor={p + 'auto'} className={propLabel + ' pl-[18px]'}>
              Auto Size
            </label>
            <Check id={p + 'auto'} />
          </div>
          <div className={row + ' mt-3'}>
            <span className={propLabel}>Vertex Color</span>
            <div className={fieldBase + ' flex h-[23px] flex-1'}>
              <button aria-label="Vertex Color" className="h-full flex-1 bg-white" />
              <button aria-label="Eyedropper" className="flex w-[22px] items-center justify-center bg-[#333]">
                <FaEyeDropper className="h-3 w-3 text-[#c4c4c4]" />
              </button>
            </div>
          </div>
          <div className={row + ' mt-0.5'}>
            <label htmlFor={p + 'grad'} className={propLabel}>
              Color Gradient
            </label>
            <Check id={p + 'grad'} />
          </div>
          <div className={row + ' mt-0.5'}>
            <label htmlFor={p + 'over'} className={propLabel}>
              Override Tags
            </label>
            <Check id={p + 'over'} />
          </div>
          {[
            ['Spacing Options (em)', 'Character', 'Word'],
            ['', 'Line', 'Paragraph'],
          ].map(([label, left, right]) => (
            <div key={left} className={row + (label ? ' mt-3' : ' mt-0.5')}>
              <span className={propLabel}>{label}</span>
              <div
                className={
                  'grid min-w-0 flex-1 items-center ' +
                  (narrow ? 'grid-cols-[27px_1fr_32px_1fr]' : '-ml-0.5 grid-cols-[85px_1fr_91px_1fr]')
                }
              >
                <label htmlFor={p + left} className={'overflow-hidden ' + (narrow ? 'mr-1' : '')}>
                  {left}
                </label>
                <TextField id={p + left} value="0" className="w-full" />
                <label htmlFor={p + right} className={'ml-[5px] overflow-hidden ' + (narrow ? 'mr-0.5' : '')}>
                  {right}
                </label>
                <TextField id={p + right} value="0" className="w-full" />
              </div>
            </div>
          ))}
          <div className={row + ' mt-3'}>
            <span className={propLabel}>Alignment</span>
            <AlignButtons lines={alignLines} label="Horizontal" />
          </div>
          {narrow && (
            <>
              <div className={row + ' mt-1.5'}>
                <span className={propLabel} />
                <AlignButtons lines={valignLines} label="Vertical" />
              </div>
              {[
                ['Wrapping', 'Enabled'],
                ['Overflow', 'Overflow'],
                ['Horizontal Mapping', 'Character'],
                ['Vertical Mapping', 'Character'],
              ].map(([label, value], i) => (
                <div key={label} className={row + (i === 0 ? ' mt-[13px]' : i === 2 ? ' mt-3' : ' mt-0.5')}>
                  <label htmlFor={p + label} className={propLabel}>
                    {label}
                  </label>
                  <Pick id={p + label} value={value} className="flex-1" />
                </div>
              ))}
              <SectionBar title="Extra Settings" className="mt-3">
                <span className="ml-[18px] italic">(Click to expand)</span>
              </SectionBar>
            </>
          )}
        </div>
        <Scrollbar thumb={narrow ? 'h-[677px]' : 'h-[450px]'} />
      </div>

      <div className="flex h-7 shrink-0 items-center gap-[7px] border-y border-[#232323] bg-[#3c3c3c] pt-px pl-[9px] font-semibold">
        Layout Properties
        <span className="h-[5px] flex-1 border-y border-[#5c5c5c]" />
        <span className="-ml-1 flex h-full w-5 items-center justify-center border-l border-[#232323]">
          <Dots />
        </span>
      </div>
      {narrow && (
        <div className="h-[180px] shrink-0 border-b border-[#1a1a1a] bg-[#323232] pt-1 pr-3 pl-[7px] whitespace-nowrap">
          <div className="overflow-hidden">
            <table className="w-[400px] table-fixed border-collapse text-left">
              <thead>
                <tr className="h-7">
                  <th className="w-[138px] font-semibold">Property</th>
                  <th className="w-[125px] font-semibold">Value</th>
                  <th className="font-semibold">Source</th>
                </tr>
              </thead>
              <tbody>
                {layoutProps.map(([name, value, source]) => (
                  <tr key={name} className="h-[22px]">
                    <td>{name}</td>
                    <td>{value}</td>
                    <td>{source}</td>
                  </tr>
                ))}
              </tbody>
            </table>
          </div>
        </div>
      )}
      {narrow ? (
        <div className="h-2 shrink-0" />
      ) : (
        <div className="pointer-events-none absolute top-[521px] -left-[31px] z-20 h-[151px] w-[582px] rounded-[4px] border-5 border-[#ff3b3b]" />
      )}
    </section>
  );
}

/* ---------- project windows ---------- */

type Node = { name: string; pad: string; open?: boolean; closed?: boolean; selected?: boolean; bold?: boolean };

const treeA: Node[] = [
  { name: 'Scenes', pad: 'pl-[39px]' },
  { name: 'TextMesh Pro', pad: 'pl-[23px]', open: true },
  { name: 'Documentation', pad: 'pl-[56px]' },
  { name: 'Examples & Extras', pad: 'pl-[40px]', open: true },
  { name: 'Fonts', pad: 'pl-[74px]' },
  { name: 'Materials', pad: 'pl-[74px]' },
  { name: 'Prefabs', pad: 'pl-[74px]' },
  { name: 'Resources', pad: 'pl-[57px]', open: true },
  { name: 'Color Gradient Presets', pad: 'pl-[91px]' },
  { name: 'Fonts & Materials', pad: 'pl-[91px]', selected: true },
  { name: 'Sprite Assets', pad: 'pl-[91px]' },
  { name: 'Scenes', pad: 'pl-[74px]' },
  { name: 'Scripts', pad: 'pl-[74px]' },
  { name: 'Sprites', pad: 'pl-[74px]' },
  { name: 'Textures', pad: 'pl-[74px]' },
  { name: 'Fonts', pad: 'pl-[56px]' },
  { name: 'Resources', pad: 'pl-[40px]', open: true },
  { name: 'Fonts & Materials', pad: 'pl-[74px]' },
  { name: 'Sprite Assets', pad: 'pl-[74px]' },
];

const treeB: Node[] = [
  { name: 'Assets', pad: 'pl-[5px]', open: true, selected: true, bold: true },
  { name: 'Scenes', pad: 'pl-[39px]' },
  { name: 'TextMesh Pro', pad: 'pl-[23px]', closed: true },
  { name: 'Packages', pad: 'pl-[5px]', open: true, bold: true },
  ...[
    'Code Coverage',
    'Custom NUnit',
    'Editor Coroutines',
    'JetBrains Rider Editor',
    'Profile Analyzer',
    'Settings Manager',
    'Test Framework',
    'TextMeshPro',
    'Timeline',
    'Unity UI',
    'Version Control',
    'Visual Scripting',
    'Visual Studio Code Editor',
    'Visual Studio Editor',
  ].map((name) => ({ name, pad: 'pl-[23px]', closed: true })),
];

type Item = { name: string; kind: 'mat' | 'font' | 'folder' | 'doc' | 'ttf' };

const itemsA: Item[] = [
  { name: 'Anton SDF - Drop Shadow', kind: 'mat' },
  { name: 'Anton SDF - Outline', kind: 'mat' },
  { name: 'Anton SDF - Sunny Days', kind: 'mat' },
  { name: 'Anton SDF', kind: 'font' },
  { name: 'Bangers SDF - Drop Shadow', kind: 'mat' },
  { name: 'Bangers SDF - Outline', kind: 'mat' },
  { name: 'Bangers SDF Glow', kind: 'mat' },
  { name: 'Bangers SDF Logo', kind: 'mat' },
  { name: 'Bangers SDF', kind: 'font' },
  { name: 'Electronic Highway Sign SDF', kind: 'font' },
  { name: 'FZZJ-TTYBJW SDF', kind: 'font' },
  { name: 'LiberationSans SDF - Metalic Green', kind: 'mat' },
  { name: 'LiberationSans SDF - Overlay', kind: 'mat' },
  { name: 'LiberationSans SDF - Soft Mask', kind: 'mat' },
  { name: 'Oswald Bold SDF', kind: 'font' },
  { name: 'Roboto-Bold SDF - Drop Shadow', kind: 'mat' },
];

const itemsB: Item[] = [
  { name: 'Scenes', kind: 'folder' },
  { name: 'TextMesh Pro', kind: 'folder' },
  { name: '7000汉字+符号+英文字符集', kind: 'doc' },
  { name: 'FZZJ-TTYBJW', kind: 'ttf' },
];

function ItemIcon({ kind }: { kind: Item['kind'] }) {
  if (kind === 'mat') return <MaterialBall />;
  if (kind === 'font') return <GlyphBox glyph="F" />;
  if (kind === 'folder') return <Folder />;
  if (kind === 'doc') return <DocIcon />;
  return <span className="text-[13px] leading-none font-extrabold">Aa</span>;
}

function Project({ tree, items, crumbs, treeWidth, thumb, offset, tabs, listThumb, searchGap = 'ml-auto' }: {
  tree: Node[];
  items: Item[];
  crumbs: string[];
  treeWidth: string;
  thumb: string;
  offset: string;
  tabs?: ReactNode;
  listThumb?: string;
  searchGap?: string;
}) {
  const filter = 'flex h-full shrink-0 items-center justify-center border-l ' + divider;
  return (
    <section className="flex min-h-0 min-w-0 flex-col overflow-hidden bg-[#383838]">
      <TabBar locked="closed">
        <Tab active icon={<Folder />}>
          Project
        </Tab>
        {tabs}
      </TabBar>
      <div className="flex h-[26px] shrink-0 items-center border-b border-[#232323] bg-[#3c3c3c] pl-2">
        <AddButton />
        <SearchBox className={'mr-[3px] w-full max-w-[397px] min-w-0 ' + searchGap} />
        <button aria-label="Search by type" className={filter + ' w-[33px]'}>
          <ShapesIcon />
        </button>
        <button aria-label="Search by label" className={filter + ' w-[33px]'}>
          <FaTag className="h-[14px] w-[14px] rotate-90 text-[#d2d2d2]" />
        </button>
        <button aria-label="Save search" className={filter + ' w-[33px]'}>
          <FaStar className="h-4 w-4 text-[#8a8a8a]" />
        </button>
        <button className={filter + ' w-[53px] gap-px'}>
          <EyeMark className="h-4 w-[18px] text-[#666]" />
          14
        </button>
      </div>
      <div className="flex min-h-0 flex-1">
        <div className={'shrink-0 overflow-hidden ' + treeWidth}>
          <ul className={offset}>
            {tree.map((n, i) => (
              <li
                key={i}
                className={
                  'flex h-5 items-center whitespace-nowrap ' +
                  n.pad +
                  (n.selected ? ' bg-[#4d4d4d]' : '') +
                  (n.bold ? ' font-semibold' : '')
                }
              >
                {n.open && <Tri dim className="mr-[7px]" />}
                {n.closed && <Tri dir="right" dim className="mr-[7px]" />}
                <Folder open={n.open} />
                <span className="ml-[5px]">{n.name}</span>
              </li>
            ))}
          </ul>
        </div>
        <Scrollbar thumb={thumb} />
        <div className="flex min-w-0 flex-1 flex-col border-l border-[#1f1f1f] bg-[#333]">
          <nav className="flex h-[27px] shrink-0 items-center gap-[7px] border-b border-[#232323] bg-[#3c3c3c] pl-[5px] whitespace-nowrap">
            {crumbs.map((c, i) => (
              <span key={c} className={'flex items-center gap-[7px] ' + (i === crumbs.length - 1 ? 'font-semibold' : '')}>
                {i > 0 && <ChevronRight className="h-[14px] w-[11px] text-[#a0a0a0]" />}
                <a href={'#' + i}>{c}</a>
              </span>
            ))}
          </nav>
          <div className="flex min-h-0 flex-1 overflow-hidden">
            <ul className="min-w-0 flex-1 overflow-hidden pt-px">
              {items.map((it) => (
                <li key={it.name} className="flex h-5 items-center pl-[3px] whitespace-nowrap">
                  <span className="flex w-4 shrink-0">
                    {(it.kind === 'font' || it.kind === 'ttf') && <Tri dir="right" dim />}
                  </span>
                  <span className="mr-[3px] flex w-5 shrink-0 justify-center">
                    <ItemIcon kind={it.kind} />
                  </span>
                  {it.name}
                </li>
              ))}
            </ul>
            {listThumb && <Scrollbar thumb={listThumb} />}
          </div>
          <div className="flex h-[25px] shrink-0 items-center justify-end bg-[#3c3c3c] pr-5">
            <input
              aria-label="Icon size"
              type="range"
              defaultValue={0}
              className="h-0.5 w-[70px] appearance-none bg-[#5e5e5e] [&::-webkit-slider-thumb]:h-3 [&::-webkit-slider-thumb]:w-3 [&::-webkit-slider-thumb]:appearance-none [&::-webkit-slider-thumb]:rounded-full [&::-webkit-slider-thumb]:bg-[#999]"
            />
          </div>
        </div>
      </div>
    </section>
  );
}

/* ---------- window chrome ---------- */

function TitleBar() {
  return (
    <header className="shrink-0 border-b border-[#e8e8e8] bg-white font-['Open_Sans',sans-serif] text-base text-black">
      <div className="flex h-7 items-center">
        <AppIcon />
        <h1>ScriptShop - SampleScene - Windows, Mac, Linux - Unity 2021.3.39f1c1 Personal* &lt;DX11&gt;</h1>
        <div className="ml-auto flex h-full text-black">
          {['M0 6h12', 'M1 3.500h8v8H1zM3.500 3.500V1h8v8H9', 'M1 1l11 11M12 1L1 12'].map((d, i) => (
            <button key={d} aria-label={['Minimize', 'Restore', 'Close'][i]} className="flex w-[59px] items-center justify-center">
              <svg viewBox="0 0 13 13" className="h-[13px] w-[13px]" fill="none" stroke="currentColor">
                <path d={d} />
              </svg>
            </button>
          ))}
        </div>
      </div>
      <nav className="flex h-[25px] items-center gap-[13px] pl-[7px]">
        {['File', 'Edit', 'Assets', 'GameObject', 'Component', 'Window', 'Help'].map((m) => (
          <button key={m}>{m}</button>
        ))}
      </nav>
    </header>
  );
}

function MainToolbar() {
  const btn = 'flex h-6 items-center justify-center rounded-[3px] bg-[#383838] text-[#c4c4c4]';
  const icon = 'fill-[#c4c4c4]';
  return (
    <div className="grid h-[38px] shrink-0 grid-cols-[1fr_auto_1fr] items-center bg-[#191919] pr-3 pl-[10px]">
      <div className="flex gap-[6px]">
        <button className={btn + ' w-16 gap-2'}>
          <FaUserCircle className="h-[15px] w-[15px]" />A
          <Tri />
        </button>
        <button aria-label="Cloud" className={btn + ' w-[38px]'}>
          <FaCloud className="h-4 w-[18px]" />
        </button>
        <button aria-label="Plastic" className={btn + ' w-[38px]'}>
          <svg viewBox="0 0 16 16" className="h-4 w-4" fill="none" stroke="#c4c4c4" strokeWidth="1.500">
            <path d="M8 1l6 3.500v7L8 15l-6-3.500v-7z" />
            <path d="M6.500 5.500h1.500a2.500 2.500 0 010 5H6.500z" />
          </svg>
        </button>
      </div>
      <div className="flex gap-px">
        <button aria-label="Play" className={btn + ' w-[39px]'}>
          <svg viewBox="0 0 12 14" className={'h-[13px] w-[11px] ' + icon}>
            <path d="M1 0l11 7-11 7z" />
          </svg>
        </button>
        <button aria-label="Pause" className={btn + ' w-[39px]'}>
          <svg viewBox="0 0 10 12" className={'h-3 w-[10px] ' + icon}>
            <path d="M0 0h4v12H0zM6 0h4v12H6z" />
          </svg>
        </button>
        <button aria-label="Step" className={btn + ' w-[39px]'}>
          <svg viewBox="0 0 13 12" className="h-3 w-[13px] fill-[#9a9a9a]">
            <path d="M0 0l9 6-9 6zM10.500 0H13v12h-2.500z" />
          </svg>
        </button>
      </div>
      <div className="flex justify-end gap-[6px]">
        <button aria-label="Undo history" className={btn + ' w-[38px]'}>
          <History className="h-4 w-4" />
        </button>
        <button aria-label="Search" className={btn + ' w-[38px]'}>
          <Search className="h-4 w-4" />
        </button>
        {['Layers', 'Layout'].map((t) => (
          <span key={t} className="relative flex h-6 w-[98px] items-center">
            <select aria-label={t} className="h-full w-full appearance-none rounded-[3px] bg-[#383838] pl-[5px] text-[#c4c4c4]">
              <option>{t}</option>
            </select>
            <Tri className="pointer-events-none absolute right-1" />
          </span>
        ))}
      </div>
    </div>
  );
}

const tb = 'h-[30px] w-[30px]';

const taskIcons: { label: string; run?: boolean; active?: boolean; icon: ReactNode }[] = [
  {
    label: 'Start',
    icon: (
      <svg viewBox="0 0 22 22" className="h-[21px] w-[21px] fill-white">
        <path d="M0 3l9-1.300v8.800H0zM10 1.500L22 0v10.500H10zM0 11.500h9v8.800L0 19zM10 11.500h12V22l-12-1.500z" />
      </svg>
    ),
  },
  { label: 'Search', icon: <Search className="h-[30px] w-[30px] -scale-x-100 text-white" strokeWidth={2} /> },
  { label: 'Everything', run: true, icon: <Search className="h-[30px] w-[30px] -scale-x-100 text-[#f57c00]" strokeWidth={4} /> },
  {
    label: 'Visual Studio',
    icon: (
      <svg viewBox="0 0 30 30" className={tb}>
        <path d="M0 9l4-2 18 15v8z" fill="#7a3fb0" />
        <path d="M0 9v13l4 2L22 8V0z" fill="#9460d0" />
        <path d="M21 0l9 3.500v23L21 30z" fill="#b78af5" />
        <path d="M4 11.500v7l4-3.500z" fill="#dedede" />
      </svg>
    ),
  },
  {
    label: 'Companion',
    icon: (
      <svg viewBox="0 0 30 30" className={tb}>
        <path d="M10 4c5-5 14-3 15 5l-1 17-5 3-8-2z" fill="#5a4450" />
        <ellipse cx="16" cy="11" rx="5" ry="5.500" fill="#f6ddd0" />
        <path d="M10 8c4 0 5-1 6-3 2 2 4 3 6 3v-3l-5-3-6 2z" fill="#5a4450" />
        <circle cx="13.500" cy="11.500" r="1" fill="#444" />
        <circle cx="18.500" cy="11.500" r="1" fill="#444" />
        <path d="M9 17l10-1 3 11-13 2z" fill="#f1f1f4" />
        <path d="M5 9l4-2v4zM7 22l5-3v6z" fill="#e0475f" />
        <path d="M13 20l4 1-2 5z" fill="#3f9f8f" />
      </svg>
    ),
  },
  {
    label: 'Chrome Beta',
    run: true,
    icon: (
      <svg viewBox="0 0 30 30" className={tb}>
        <circle cx="15" cy="15" r="15" fill="#fbc116" />
        <path d="M15 15L2 7.500A15 15 0 0128 7.500H15z" fill="#e33b2e" />
        <path d="M2 7.500A15 15 0 0014 30l7-12-6-3z" fill="#229342" />
        <circle cx="15" cy="15" r="7" fill="#fff" />
        <circle cx="15" cy="15" r="5.500" fill="#1a73e8" />
        <rect x="9" y="15" width="21" height="9" rx="1" fill="#444" />
        <text x="19.500" y="22" textAnchor="middle" fontSize="8" fontFamily="Liberation Sans" fill="#fff">
          Beta
        </text>
      </svg>
    ),
  },
  {
    label: 'Typora',
    icon: (
      <span className="flex h-[28px] w-[27px] items-center justify-center rounded-[6px] bg-white font-['Liberation_Serif',serif] text-[22px] text-black shadow">
        T
      </span>
    ),
  },
  {
    label: 'Medal',
    icon: (
      <svg viewBox="0 0 30 30" className={tb}>
        <path d="M2 0h26l-2 8-11 5L4 8z" fill="#2367e0" />
        <path d="M11 0h8v11l-4 2-4-2z" fill="#174aa8" />
        <circle cx="15" cy="20" r="9.500" fill="#ff8a3c" />
        <circle cx="15" cy="20" r="6" fill="#e8502a" />
      </svg>
    ),
  },
  {
    label: 'V',
    run: true,
    icon: (
      <span className="flex h-[30px] w-[29px] items-center justify-center rounded-full bg-radial from-[#0f2f4a] to-[#2e8fb8] font-['Liberation_Serif',serif] text-[22px] font-bold text-white italic">
        V
      </span>
    ),
  },
  {
    label: 'QQ',
    run: true,
    icon: (
      <svg viewBox="0 0 30 30" className={tb}>
        <rect width="30" height="30" rx="6" fill="#fff" />
        <path d="M15 2c5 0 7 4 7 9l3 8-3 1-2 6H10l-2-6-3-1 3-8c0-5 2-9 7-9z" fill="#111" />
        <ellipse cx="15" cy="20" rx="5.500" ry="6" fill="#fff" />
        <path d="M8 13c4 3 10 3 14 0v3c-4 2-10 2-14 0z" fill="#e6212b" />
        <path d="M11 10h8l-4 2.500zM8 26l6-1v3H8zM22 26l-6-1v3h6z" fill="#f7a81b" />
        <circle cx="12.500" cy="7" r="1.600" fill="#fff" />
        <circle cx="17.500" cy="7" r="1.600" fill="#fff" />
      </svg>
    ),
  },
  {
    label: 'Unity Hub',
    run: true,
    icon: (
      <svg viewBox="0 0 30 30" className={tb}>
        <path d="M15 1l12 6v16l-12 6L3 23V7z" fill="#d4d4d4" stroke="#bbb" />
        <path d="M15 7l7.500 4v8L15 23l-7.500-4v-8z" fill="#333" />
        <path d="M15 15v8M15 15l-7-4M15 15l7-4" stroke="#ddd" strokeWidth="1.800" />
      </svg>
    ),
  },
  {
    label: 'Cloud drive',
    run: true,
    icon: (
      <svg viewBox="0 0 30 30" className={tb} fill="none" strokeWidth="3">
        <rect width="30" height="30" rx="6" fill="#fff" />
        <circle cx="15" cy="10" r="4.500" stroke="#f0435a" />
        <circle cx="9.500" cy="17.500" r="4.500" stroke="#2a8ff0" />
        <circle cx="20.500" cy="17.500" r="4.500" stroke="#2a8ff0" />
        <path d="M10 28.500h5" stroke="#f0435a" />
        <path d="M16 28.500h5" stroke="#2a8ff0" />
      </svg>
    ),
  },
  {
    label: 'Files',
    run: true,
    icon: (
      <svg viewBox="0 0 30 30" className={tb}>
        <path d="M1 3h11l3 4h-14z" fill="#e0a010" />
        <path d="M1 6h28v20H1z" fill="#ffcf48" />
        <path d="M6 27V16h18v11h-5v-6h-8v6z" fill="#2f8ede" />
      </svg>
    ),
  },
  {
    label: 'Unity',
    run: true,
    active: true,
    icon: (
      <svg viewBox="0 0 30 30" className={tb}>
        <path d="M15 0l13 7v16l-13 7L2 23V7z" fill="#4a4a4a" />
        <path d="M15 0l13 7v16l-13 7z" fill="#2a2a2a" />
        <path d="M15 6l8 4.500v9L15 24l-8-4.500v-9zM15 15v9M15 15l-8-4.500M15 15l8-4.500" fill="none" stroke="#fff" strokeWidth="1.900" />
      </svg>
    ),
  },
  { label: 'VS Code', run: true, icon: <VscVscode className="h-[30px] w-[30px] text-[#1f8ad2]" /> },
  {
    label: 'AS',
    run: true,
    icon: (
      <span className="flex h-[29px] w-[29px] items-center justify-center rounded-[5px] bg-[#262a35] font-['Roboto_Condensed',sans-serif] text-[20px] font-black text-white">
        A<span className="text-[#f0485c]">S</span>
      </span>
    ),
  },
  {
    label: 'Phone',
    run: true,
    icon: <span className="h-[29px] w-4 rounded-[3px] border-2 border-[#7d7d7d] bg-linear-to-b from-[#9fd0f8] to-[#ecd6bc]" />,
  },
  {
    label: 'PotPlayer',
    run: true,
    icon: (
      <svg viewBox="0 0 30 30" className={tb}>
        <rect x="1" width="28" height="30" rx="5" fill="#ffc928" />
        <path d="M8 6h7a8.500 8.500 0 010 17h-2" fill="none" stroke="#222" strokeWidth="3.500" />
        <path d="M8 5v20h3.500l2-3.500-2-1.500V5z" fill="#222" />
        <path d="M17 9l-4.500 6.500h3L14.500 21l4.500-7h-3z" fill="#222" stroke="#ffc928" strokeWidth="0.800" />
      </svg>
    ),
  },
  {
    label: 'Lens',
    run: true,
    icon: (
      <svg viewBox="0 0 30 30" className={tb}>
        <path d="M15 1l4 0 10 26h-6L15 8 7 26H1z" fill="#5965c8" />
        <circle cx="17" cy="17" r="6.500" fill="#b9c3f2" stroke="#8a8fc0" strokeWidth="1.500" />
        <path d="M21 22l6 6" stroke="#8f8f9e" strokeWidth="3" />
      </svg>
    ),
  },
];

function Taskbar() {
  const pair = 'flex flex-col justify-center gap-px leading-5';
  return (
    <footer className="flex h-[49px] shrink-0 bg-[linear-gradient(100deg,#dedede_0_892px,#c4c4c4_894px_906px,#929292_908px)] font-['Open_Sans','Noto_Sans_CJK_SC',sans-serif] text-[15px] text-white">
      <div className="flex shrink-0">
        {taskIcons.map((t) => (
          <button
            key={t.label}
            aria-label={t.label}
            className={'relative flex w-[62px] items-center justify-center first:w-[60px] ' + (t.active ? 'bg-[#e6e6e6]' : '')}
          >
            {t.icon}
            {t.run && <span className="absolute inset-x-[5px] bottom-0 h-0.5 bg-[#c3c1fa]" />}
          </button>
        ))}
      </div>
      <div className="ml-auto flex shrink-0 whitespace-nowrap">
        <div className={pair + ' w-[83px]'}>
          <span className="flex items-center gap-1">
            <span className="h-[9px] w-[18px] rounded-[2px] border border-white bg-[#7cc46a]" />
            100%
          </span>
          <span className="flex items-center gap-1">
            <span className="h-4 w-[18px] rounded-full border-2 border-[#707070] bg-[#858585]" />
            未启动
          </span>
        </div>
        <div className={pair + ' w-[85px]'}>
          <span>Upload:</span>
          <span>Download:</span>
        </div>
        <div className={pair + ' w-[90px] text-right'}>
          <span>0.16 KB/s</span>
          <span>0.28 KB/s</span>
        </div>
        <div className={pair + ' ml-[11px] w-[117px]'}>
          <span className="flex justify-between">
            <span className="w-[70px] bg-[#ffe6ff]">CPU:</span>60 %
          </span>
          <span className="flex justify-between">
            <span className="w-[54px] bg-[#ffe6ff]">MEM:</span>30.09 GB
          </span>
        </div>
        <div className={pair + ' ml-4 w-[86px]'}>
          <span>Network:</span>
          <span>BPD Status:</span>
        </div>
        <div className={pair + ' w-[78px] text-right'}>
          <span>0.44 KB/s</span>
          <span>0.00 W</span>
        </div>
        <div className="ml-2 flex items-center [&>*]:flex [&>*]:w-10 [&>*]:justify-center">
          <button aria-label="Show hidden icons">
            <svg viewBox="0 0 18 10" className="h-[10px] w-[18px]" fill="none" stroke="#fff" strokeWidth="1.500">
              <path d="M1 9l8-8 8 8" />
            </svg>
          </button>
          <button aria-label="OneDrive">
            <FaCloud className="h-5 w-[22px]" />
          </button>
          <button aria-label="Updates">
            <svg viewBox="0 0 22 22" className="h-[22px] w-[22px]" fill="none" stroke="#fff" strokeWidth="1.300">
              <path d="M1 3l18-2v18L1 18z" />
              <path d="M13 7a4 4 0 10.500 6" />
              <circle cx="16" cy="16" r="5" fill="#ff9800" stroke="none" />
            </svg>
          </button>
          <button aria-label="Power">
            <svg viewBox="0 0 22 16" className="h-4 w-[22px]" fill="none" stroke="#fff" strokeWidth="1.500">
              <rect x="6" y="5" width="14" height="9" />
              <path d="M8 7h10v5H8zM1 1v3h5V1M3 4v5" fill="#fff" />
            </svg>
          </button>
          <button aria-label="Network">
            <svg viewBox="0 0 18 18" className="h-[18px] w-[18px]" fill="none" stroke="#fff" strokeWidth="1.300">
              <path d="M2 17A15 15 0 0117 2M6 17A11 11 0 0117 6M10 17a7 7 0 017-7M14 17a3 3 0 013-3" />
            </svg>
          </button>
          <button aria-label="Volume">
            <Volume2 className="h-5 w-5" strokeWidth={1.5} />
          </button>
          <button aria-label="Pen">
            <svg viewBox="0 0 20 20" className="h-5 w-5" fill="none" stroke="#fff" strokeWidth="1.400">
              <path d="M19 1l-9 10-2 5 4-3L19 3M9 13c-5-3-9 1-8 4s5 2 7-1" />
            </svg>
          </button>
          <button className="text-[19px]">英</button>
        </div>
        <button className="my-auto ml-2 flex h-[21px] w-[21px] items-center justify-center border border-black bg-white text-base leading-none text-black">
          拼
        </button>
        <div className={pair + ' ml-[22px] w-[128px] text-center'}>
          <span>14:03</span>
          <span>2025/9/21/星期日</span>
        </div>
        <button aria-label="Notifications" className="relative mr-[3px] ml-[22px] w-[47px] border-r border-[#b8b8b8]">
          <svg viewBox="0 0 20 18" className="absolute top-[15px] left-0 h-[18px] w-5">
            <path d="M0 0h20v15h-6l-4 3v-3H0z" fill="#fff" />
            <path d="M4 4h12M4 7.500h12M4 11h8" stroke="#888" />
          </svg>
          <span className="absolute top-6 left-[7px] flex h-5 w-6 items-center justify-center rounded-full bg-[#4c4c4c] text-sm font-bold">
            13
          </span>
        </button>
      </div>
    </footer>
  );
}

export default function App() {
  return (
    <div className="flex h-screen flex-col overflow-hidden bg-[#191919] font-['Inter','Noto_Sans_CJK_SC',sans-serif] text-[15px] leading-5 text-[#c8c8c8]">
      <TitleBar />
      <MainToolbar />
      <main className="flex min-h-0 flex-1 gap-[3px]">
        <div className="flex min-w-0 flex-1 flex-col gap-0.5">
          <div className="flex min-h-0 flex-[1022] gap-[3px]">
            <Hierarchy />
            <Scene />
            <Inspector />
          </div>
          <div className="grid min-h-0 flex-[407] grid-cols-[873fr_1072fr_314fr] gap-0.5">
            <Project
              tree={treeA}
              items={itemsA}
              crumbs={['Assets', 'TextMesh Pro', 'Examples & Extras', 'Resources', 'Fonts & Materials']}
              treeWidth="w-[261px]"
              thumb="mt-11 h-[145px]"
              listThumb="h-[215px]"
              offset="-mt-3"
              tabs={
                <>
                  <Tab icon={<FilmIcon />}>Timeline</Tab>
                  <Tab icon={<FaClock className="h-[15px] w-[15px]" />}>Animation</Tab>
                  <Tab icon={<FaGear className="h-[15px] w-[15px]" />}>Preferences</Tab>
                </>
              }
            />
            <Project
              tree={treeB}
              items={itemsB}
              crumbs={['Assets']}
              treeWidth="w-[280px]"
              thumb="mt-[53px] h-[250px]"
              offset="mt-[13px]"
            />
            <Project
              tree={treeB}
              items={itemsB}
              crumbs={['Assets']}
              treeWidth="mr-0.5 w-[45px]"
              thumb="mt-[53px] h-[250px]"
              offset="mt-[13px]"
              searchGap="ml-5"
            />
          </div>
        </div>
        <Inspector narrow />
      </main>
      <div className="flex h-[27px] shrink-0 items-center gap-[6px] bg-[#191919] pr-[10px] pl-1">
        <svg viewBox="0 0 16 17" className="h-[17px] w-[15px]">
          <path d="M8 0a7.500 7.500 0 017.500 7.500c0 3-1.500 5-3.500 6.500l1 3-4-2A7.500 7.500 0 118 0z" fill="#f0f0f0" />
          <path d="M8 3v6M8 10.500v2.200" stroke="#191919" strokeWidth="2.200" />
        </svg>
        <span>Font Atlas generation completed in: 331.487 ms</span>
        <span className="ml-auto flex items-center gap-[14px]">
          <Slashed>
            <FaBug className="h-[17px] w-[17px]" />
          </Slashed>
          <Slashed>
            <FaDatabase className="h-4 w-4" />
          </Slashed>
          <Slashed>
            <svg viewBox="0 0 18 18" className="h-[17px] w-[17px]" fill="none" stroke="#c4c4c4" strokeWidth="1.600">
              <path d="M1 5V1h4M13 1h4v4M17 13v4h-4M5 17H1v-4" />
              <circle cx="9" cy="9" r="6.500" />
              <path d="M9 4.500a3.500 3.500 0 012 6.500v2.500H7V11a3.500 3.500 0 012-6.500z" fill="#c4c4c4" stroke="none" />
            </svg>
          </Slashed>
          <CircleCheck className="h-[18px] w-[18px]" strokeWidth={1.5} />
        </span>
      </div>
      <Taskbar />
    </div>
  );
}
